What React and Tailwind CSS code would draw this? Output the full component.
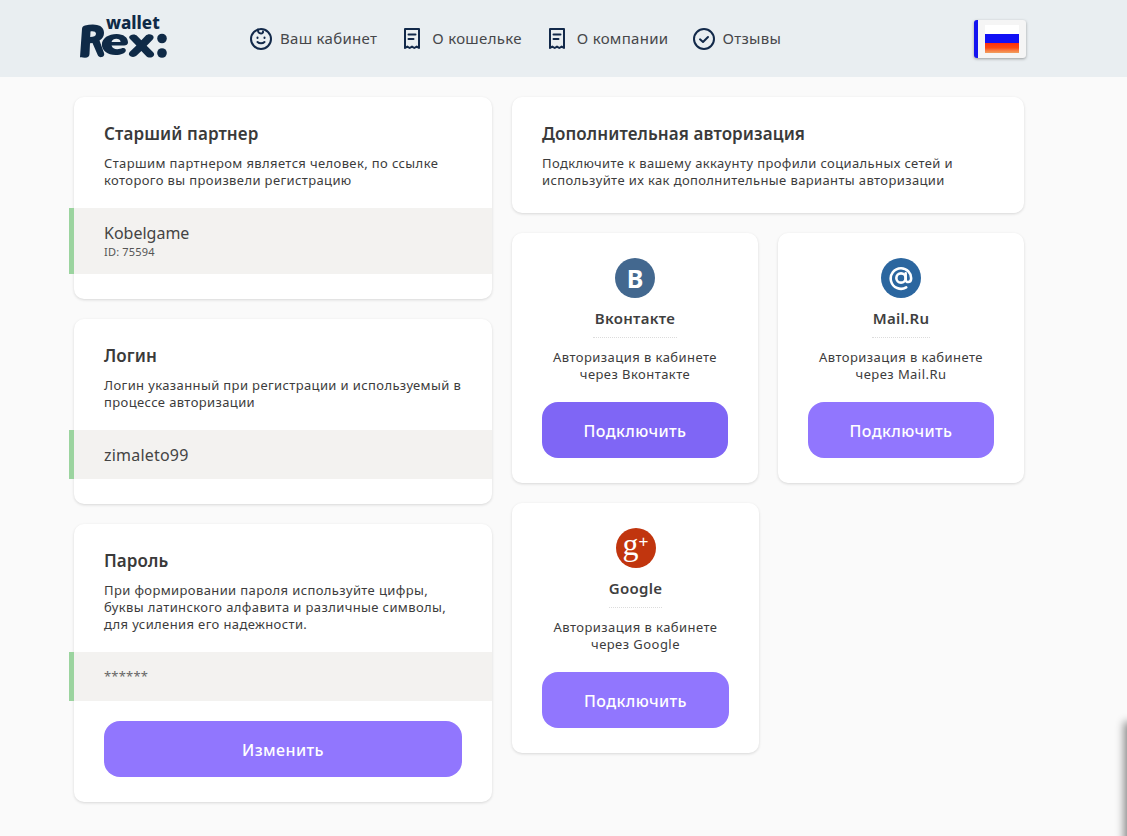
import React from "react";

const font = { fontFamily: '"Noto Sans", sans-serif' };

const Receipt = () => (
  <svg width="16" height="22" viewBox="0 0 16 22" fill="none" stroke="#12294a" strokeWidth="2" strokeLinejoin="round" strokeLinecap="round">
    <path d="M1 1h14v19l-2.300-1.400L10.300 20 8 18.600 5.700 20l-2.400-1.400L1 20z" />
    <path d="M4.500 6.500h7M4.500 11h5" />
  </svg>
);
const Baby = () => (
  <svg width="24" height="24" viewBox="0 0 24 24" fill="none" stroke="#12294a" strokeWidth="2" strokeLinecap="round">
    <circle cx="12" cy="12" r="10" />
    <path d="M8.500 10.500v.5M15.500 10.500v.5" />
    <path d="M8.500 15c1.800 1.800 5.200 1.800 7 0" />
    <path d="M9 2.500c-.5 2.500 1 4 3 4 1.500 0 2.300-1 2-2" />
  </svg>
);
const Check = () => (
  <svg width="24" height="24" viewBox="0 0 24 24" fill="none" stroke="#12294a" strokeWidth="2" strokeLinecap="round" strokeLinejoin="round">
    <circle cx="12" cy="12" r="10" />
    <path d="M8 12.300l3 2.700 5-5" />
  </svg>
);

const NavItem = ({ icon, label, className }) => (
  <div className={`flex items-center ${className}`}>
    {icon}
    <span className="text-[15px] tracking-[0.3px] text-[#46474a] leading-none">{label}</span>
  </div>
);

const Card = ({ className = "", children }) => (
  <div className={`bg-white rounded-[10px] shadow-[0_1px_3px_rgba(0,0,0,0.14)] ${className}`}>{children}</div>
);

const Head = ({ title, children }) => (
  <>
    <h2 className="text-[17px] leading-[22px] tracking-[0.1px] font-semibold text-[#3a3a3a]">{title}</h2>
    <p className="mt-[10px] text-[13px] leading-[17px] tracking-[0.38px] text-[#3c3c3c]">{children}</p>
  </>
);

const Row = ({ className = "", children }) => (
  <div className={`-ml-[5px] border-l-[5px] border-[#9bd49f] bg-[#f3f2f0] pl-[30px] flex flex-col justify-center ${className}`}>
    {children}
  </div>
);

const Social = ({ icon, name, line, color, dash, className = "", btn = "w-[186px]" }) => (
  <Card className={`h-[250px] flex flex-col items-center pt-[25px] ${className}`}>
    {icon}
    <div className="mt-[8px] text-[15px] leading-[24px] tracking-[0.3px] font-semibold text-[#3f3f3f]">{name}</div>
    <div className={`mt-[7px] border-t border-dotted border-[#dcdcdc] ${dash}`} />
    <p className="mt-[11px] text-center text-[13px] leading-[17px] tracking-[0.45px] text-[#3c3c3c]">
      Авторизация в кабинете
      <br />
      через {line}
    </p>
    <button className={`mt-[19px] h-[56px] pt-[2px] ${btn} rounded-[16px] text-white text-[16px] tracking-[0.4px] font-medium ${color}`}>Подключить</button>
  </Card>
);

export default function App() {
  return (
    <div style={font} className="relative w-full h-[836px] overflow-hidden bg-[#fafafa]">
      <header className="h-[77px] bg-[#e9eef1] flex items-center">
        <div className="relative ml-[79px] w-[90px] h-[46px]">
          <svg width="90" height="46" viewBox="0 0 90 46" className="absolute left-0 -top-[2px]">
            <g fill="#0f2a47">
              <path d="M1 43 3 15c0-2 1-3 3-3.500C10 10.500 15 10 18 11c5 1 7 4 7 8 0 3-1.500 6-4.500 7.500L25 39c.7 2-.2 3.500-2 4-2 .5-3.500-.2-4.300-2L13.500 29l-2.500.3L10.500 40c-.2 2.500-1.500 3.700-4.500 3.700-3.500 0-5-.5-5-.7zM11.500 17.500 11.200 23c3.500 0 5.800-1 5.800-3.200 0-2-2.500-2.800-5.500-2.300z" />
              <g transform="translate(-7.800 0) scale(1.136 1)">
                <path d="M40 20c6 0 10 3.500 10 8.500 0 2-1.500 3-3.500 3H35.500c.7 2.500 2.500 3.700 5 3.700 1.800 0 3.300-.5 4.500-1.100 2-.8 3.500 1 3 2.800-.5 2-4 4-9 4-7 0-12-4.300-12-10.500S33 20 40 20zm-4.500 8h8c-.2-2-1.700-3.200-3.800-3.200-2 0-3.600 1.200-4.200 3.200z" />
              </g>
              <g transform="translate(-16.300 0) scale(1.3 1)">
                <path d="M52 21.500c1.700-1.500 4-1.200 5.300.5l3.200 4.200 3.300-4.500c1.300-1.700 3.500-2 5-.7 1.500 1.300 1.500 3.200.3 4.800l-4.500 6 5 6.500c1.200 1.700 1 3.600-.6 4.700-1.600 1.100-3.600.7-4.800-.9L60.500 37l-3.600 4.600c-1.300 1.600-3.300 1.900-4.800.7-1.500-1.200-1.600-3-.4-4.600l5-6.300-4.700-6.100c-1.200-1.500-1.100-3 0-3.800z" />
              </g>
              <circle cx="83" cy="24.500" r="4.800" />
              <circle cx="83" cy="39" r="4.800" />
            </g>
          </svg>
          <span className="absolute left-[27px] -top-[3px] text-[17px] font-extrabold leading-[20px] text-[#0f2a47]">wallet</span>
        </div>
        <NavItem icon={<Baby />} label="Ваш кабинет" className="ml-[80px] gap-[7px]" />
        <NavItem icon={<Receipt />} label="О кошельке" className="ml-[27px] gap-[12px]" />
        <NavItem icon={<Receipt />} label="О компании" className="ml-[27px] gap-[12px]" />
        <NavItem icon={<Check />} label="Отзывы" className="ml-[24px] gap-[6px]" />
        <div className="ml-auto mr-[101px] w-[52px] h-[38px] bg-[#f5f5f5] rounded-[3px] border-l-[4px] border-[#1414f0] shadow-[0_1px_3px_rgba(0,0,0,0.35)] flex items-center justify-center">
          <div className="w-[34px] h-[28px] flex flex-col">
            <div className="h-[9px] bg-white" />
            <div className="h-[9px] bg-[#1010f5]" />
            <div className="h-[10px] bg-gradient-to-b from-[#fb2a10] via-[#fb4a10] to-[#f0a060]" />
          </div>
        </div>
      </header>

      <main className="flex gap-[20px] pl-[74px] pt-[20px]">
        <div className="w-[418px] flex flex-col gap-[20px]">
          <Card className="h-[202px] pt-[26px]">
            <div className="px-[30px]">
              <Head title="Старший партнер">
                Старшим партнером является человек, по ссылке
                <br />
                которого вы произвели регистрацию
              </Head>
            </div>
            <Row className="mt-[19px] h-[66px]">
              <div className="text-[16px] leading-[20px] -mt-[1px] text-[#444]">Kobelgame</div>
              <div className="text-[11px] leading-[15px] mt-[1px] tracking-[0.2px] text-[#555]">ID: 75594</div>
            </Row>
          </Card>
          <Card className="h-[185px] pt-[26px]">
            <div className="px-[30px]">
              <Head title="Логин">
                Логин указанный при регистрации и используемый в
                <br />
                процессе авторизации
              </Head>
            </div>
            <Row className="mt-[19px] h-[49px]">
              <div className="text-[16px] tracking-[0.2px] text-[#444]">zimaleto99</div>
            </Row>
          </Card>
          <Card className="h-[278px] pt-[26px]">
            <div className="px-[30px]">
              <Head title="Пароль">
                При формировании пароля используйте цифры,
                <br />
                буквы латинского алфавита и различные символы,
                <br />
                для усиления его надежности.
              </Head>
            </div>
            <Row className="mt-[19px] h-[49px]">
              <div className="text-[13px] tracking-[0.2px] text-[#666]">******</div>
            </Row>
            <div className="px-[30px] mt-[20px]">
              <button className="w-full h-[56px] pt-[2px] rounded-[16px] bg-[#9176fe] text-white text-[16px] tracking-[0.4px] font-medium">Изменить</button>
            </div>
          </Card>
        </div>

        <div className="w-[512px] flex flex-col gap-[20px]">
          <Card className="h-[116px] pt-[26px] px-[30px]">
            <Head title="Дополнительная авторизация">
              Подключите к вашему аккаунту профили социальных сетей и
              <br />
              используйте их как дополнительные варианты авторизации
            </Head>
          </Card>
          <div className="flex gap-[20px]">
            <Social
              className="w-[246px]"
              name="Вконтакте"
              line="Вконтакте"
              dash="w-[84px]"
              color="bg-[#7f66f5]"
              icon={
                <div className="w-[40px] h-[40px] rounded-full bg-[#43688f] flex items-center justify-center text-white text-[25px] font-bold leading-none">В</div>
              }
            />
            <Social
              className="w-[246px]"
              name="Mail.Ru"
              line="Mail.Ru"
              dash="w-[58px]"
              color="bg-[#9176fe]"
              icon={
                <div className="w-[40px] h-[40px] rounded-full bg-[#2b669f] flex items-center justify-center">
                  <svg width="26" height="26" viewBox="0 0 24 24" fill="none" stroke="#fff" strokeWidth="2.400" strokeLinecap="round">
                    <circle cx="12" cy="12" r="4.300" />
                    <path d="M16.300 7.700v5.800c0 3 4.700 3 5-.5.5-5.500-4-10-9.300-10a9.500 9.500 0 1 0 4.800 17.700" />
                  </svg>
                </div>
              }
            />
          </div>
          <Social
            className="w-[247px]"
            btn="w-[187px]"
            name="Google"
            line="Google"
            dash="w-[53px]"
            color="bg-[#9176fe]"
            icon={
              <div className="w-[40px] h-[40px] rounded-full bg-[#c1350e] flex items-center justify-center text-white leading-none">
                <span className="text-[32px] -mt-[9px]" style={{ fontFamily: '"Liberation Serif", serif' }}>g</span>
                <span className="text-[17px] -mt-[14px]" style={{ fontFamily: '"Liberation Sans", sans-serif' }}>+</span>
              </div>
            }
          />
        </div>
      </main>

      <div className="absolute left-[1127px] top-[725px] w-[20px] h-[140px] bg-[#555] shadow-[0_0_8px_3px_rgba(0,0,0,0.45)]" />
    </div>
  );
}
